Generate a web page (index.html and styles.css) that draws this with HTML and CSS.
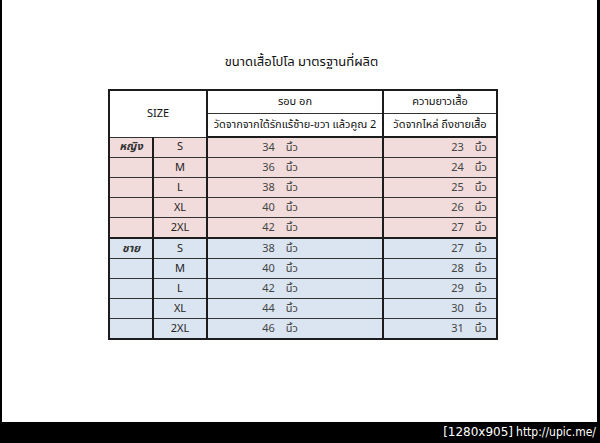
FILE: index.html
```html
<!DOCTYPE html>
<html lang="th">
<head>
<meta charset="utf-8">
<title>ขนาดเสื้อโปโล</title>
<link rel="stylesheet" href="styles.css">
</head>
<body>
<div class="sheet">
  <h1 class="title">ขนาดเสื้อโปโล มาตรฐานที่ผลิต</h1>
  <table class="sizes">
    <colgroup>
      <col class="c-gender"><col class="c-size"><col class="c-chest"><col class="c-len">
    </colgroup>
    <thead>
      <tr class="h1">
        <th colspan="2" rowspan="2" class="size-h">SIZE</th>
        <th>รอบ อก</th>
        <th>ความยาวเสื้อ</th>
      </tr>
      <tr class="h2">
        <th>วัดจากจากใต้รักแร้ซ้าย-ขวา แล้วคูณ 2</th>
        <th>วัดจากไหล่ ถึงชายเสื้อ</th>
      </tr>
    </thead>
    <tbody class="women">
      <tr><td class="g">หญิง</td><td class="s">S</td><td class="chest">34<span class="u">นิ้ว</span></td><td class="len">23<span class="u">นิ้ว</span></td></tr>
      <tr><td class="g"></td><td class="s">M</td><td class="chest">36<span class="u">นิ้ว</span></td><td class="len">24<span class="u">นิ้ว</span></td></tr>
      <tr><td class="g"></td><td class="s">L</td><td class="chest">38<span class="u">นิ้ว</span></td><td class="len">25<span class="u">นิ้ว</span></td></tr>
      <tr><td class="g"></td><td class="s">XL</td><td class="chest">40<span class="u">นิ้ว</span></td><td class="len">26<span class="u">นิ้ว</span></td></tr>
      <tr><td class="g"></td><td class="s">2XL</td><td class="chest">42<span class="u">นิ้ว</span></td><td class="len">27<span class="u">นิ้ว</span></td></tr>
    </tbody>
    <tbody class="men">
      <tr><td class="g">ชาย</td><td class="s">S</td><td class="chest">38<span class="u">นิ้ว</span></td><td class="len">27<span class="u">นิ้ว</span></td></tr>
      <tr><td class="g"></td><td class="s">M</td><td class="chest">40<span class="u">นิ้ว</span></td><td class="len">28<span class="u">นิ้ว</span></td></tr>
      <tr><td class="g"></td><td class="s">L</td><td class="chest">42<span class="u">นิ้ว</span></td><td class="len">29<span class="u">นิ้ว</span></td></tr>
      <tr><td class="g"></td><td class="s">XL</td><td class="chest">44<span class="u">นิ้ว</span></td><td class="len">30<span class="u">นิ้ว</span></td></tr>
      <tr><td class="g"></td><td class="s">2XL</td><td class="chest">46<span class="u">นิ้ว</span></td><td class="len">31<span class="u">นิ้ว</span></td></tr>
    </tbody>
  </table>
</div>
<div class="footer"><span class="dim">[1280x905]</span><span class="url">http://upic.me/</span></div>
</body>
</html>
```
FILE: styles.css
```css
html, body {
  margin: 0;
  padding: 0;
  background: #000;
}
body {
  width: 600px;
  height: 443px;
  overflow: hidden;
  font-family: "Noto Sans Thai", "Noto Sans", "DejaVu Sans", sans-serif;
}
.sheet {
  margin-left: 2px;
  width: 595px;
  height: 422px;
  background: #fff;
  box-sizing: border-box;
  padding-top: 53px;
  overflow: hidden;
}
.title {
  margin: 0;
  font-size: 13px;
  font-weight: normal;
  color: #111;
  text-align: center;
  line-height: 18px;
  padding-left: 4px;
}
.sizes {
  margin: 18px 0 0 106px;
  border-collapse: collapse;
  table-layout: fixed;
  width: 388px;
  border: 2px solid #1c1c1c;
  font-size: 11px;
  color: #222;
}
.c-gender { width: 44px; }
.c-size { width: 54px; }
.c-chest { width: 176px; }
.c-len { width: 114px; }
.sizes th, .sizes td {
  padding: 0;
  border: 1px solid #333;
  border-left: 2px solid #1c1c1c;
  border-right: 2px solid #1c1c1c;
  white-space: nowrap;
  overflow: hidden;
}
.sizes th {
  font-weight: normal;
  color: #111;
  text-align: center;
  height: 22px;
  line-height: 14px;
}
.sizes thead tr.h2 th { border-bottom: 2px solid #1c1c1c; }
.size-h { background: #fff; }
.sizes td { height: 19px; line-height: 14px; }
.women td { background: #f2dcdb; }
.men td { background: #dbe5f1; }
.men tr:first-child td { border-top: 2px solid #1c1c1c; }
.g {
  text-align: center;
  font-style: italic;
  font-weight: bold;
  color: #333;
}
.s { text-align: center; color: #222; }
.chest { text-align: right; padding-right: 84px !important; color: #444; }
.len { text-align: right; padding-right: 9px !important; color: #444; }
.u { margin-left: 11px; }
.footer {
  height: 21px;
  color: #fff;
  text-align: right;
  padding-right: 4px;
  line-height: 21px;
  font-size: 13px;
}
.dim { font-family: "DejaVu Sans", sans-serif; font-size: 12px; }
.url { font-family: "Liberation Sans Narrow", "DejaVu Sans Condensed", "Liberation Sans", sans-serif; font-size: 12px; margin-left: 3px; }
```
